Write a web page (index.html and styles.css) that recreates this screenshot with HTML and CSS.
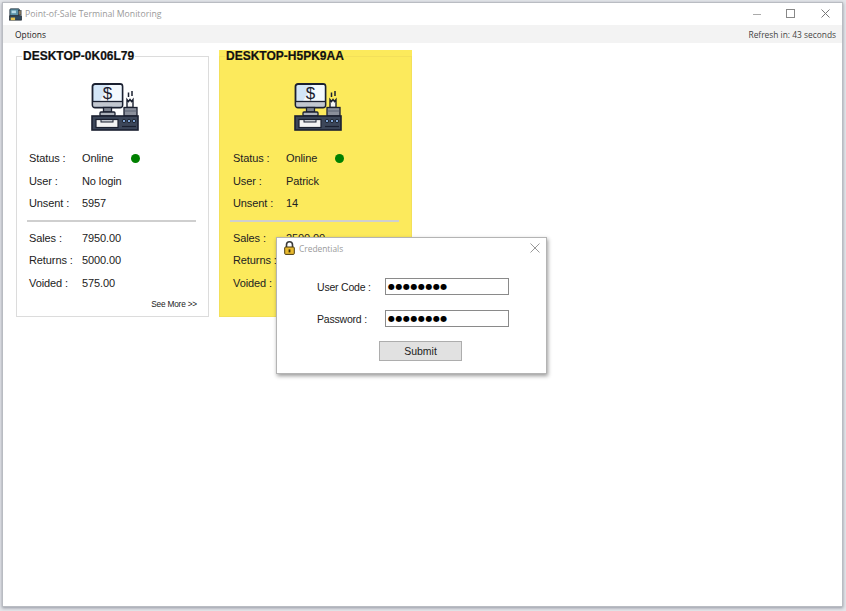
FILE: index.html
```html
<!DOCTYPE html>
<html>
<head>
    <meta charset="utf-8" />
    <title>Point-of-Sale Terminal Monitoring</title>
    <link rel="stylesheet" href="styles.css">
</head>

<body>
    <div class="window">
        <div class="titlebar">
            <svg class="app-icon" width="13" height="13" viewBox="0 0 15 15">
                <rect x="1" y="1" width="11" height="8" rx="1" fill="#5b93a8" stroke="#2a3540" />
                <rect x="3" y="3" width="5" height="3" fill="#b7dbe6" />
                <rect x="11" y="3" width="3" height="5" fill="#8b7a5d" stroke="#2a3540" stroke-width=".7" />
                <rect x="0.5" y="9" width="14" height="5" fill="#2f4a5e" stroke="#20262e" stroke-width=".8" />
                <rect x="2" y="11" width="5" height="3" fill="#e6c34d" />
            </svg>
            <span class="app-title">Point-of-Sale Terminal Monitoring</span>
            <div class="win-buttons">
                <svg width="10" height="10" viewBox="0 0 10 10"><path d="M2 5.5h8" stroke="#aaa" /></svg>
                <svg width="10" height="10" viewBox="0 0 10 10"><rect x=".5" y=".5" width="8" height="8" fill="none" stroke="#888" /></svg>
                <svg width="10" height="10" viewBox="0 0 10 10"><path d="M.5 .5l8 8M8.5 .5l-8 8" stroke="#777" fill="none" /></svg>
            </div>
        </div>

        <div class="menubar">
            <span>Options</span>
            <span class="refresh">Refresh in: 43 seconds</span>
        </div>

        <div class="terminals">
            <div class="terminal">
                <fieldset class="panel">
                    <legend>DESKTOP-0K06L79</legend>
                    <svg class="pos-icon" viewBox="0 0 48 48">
                        <rect x="1.5" y="1" width="30" height="23.5" rx="2.5" fill="#d3e6f8" stroke="#1b2030" stroke-width="1.8" />
                        <path d="M18 2h11.5a1 1 0 0 1 1 1v15H9z" fill="#f4f9fe" />
                        <rect x="2.4" y="18.5" width="28.2" height="5" fill="#c3c8d0" />
                        <path d="M1.5 18.5h30" stroke="#1b2030" stroke-width="1.3" />
                        <text x="16.5" y="15.5" class="dollar">$</text>
                        <rect x="12.5" y="24.5" width="8" height="4.5" fill="#7d838f" stroke="#1b2030" stroke-width="1.3" />
                        <rect x="9" y="29" width="15" height="4" rx="1" fill="#aeb3bc" stroke="#1b2030" stroke-width="1.3" />
                        <path d="M36 24.5v-8l1.5 2 1.5-2 1.5 2 1.5-2v8z" fill="#f5f5f5" stroke="#1b2030" stroke-width="1.4" />
                        <path d="M37.5 14V9.5M41 13V8" stroke="#1b2030" stroke-width="1.5" fill="none" />
                        <rect x="33" y="24.5" width="13" height="8.5" fill="#8a8f9b" stroke="#1b2030" stroke-width="1.3" />
                        <path d="M33.6 28h11.8" stroke="#5d6474" stroke-width="1" />
                        <rect x="1" y="33" width="46" height="14" fill="#3c4659" stroke="#1b2030" stroke-width="1.6" />
                        <rect x="5" y="36.5" width="22" height="8" fill="#f3f3f3" stroke="#1b2030" stroke-width="1.2" />
                        <rect x="10" y="36.5" width="12" height="2.5" fill="#c5c9d0" stroke="#1b2030" stroke-width="1" />
                        <circle cx="33" cy="38" r="1.7" fill="#7fa4d4" stroke="#10141c" stroke-width=".8" />
                        <circle cx="38" cy="38" r="1.7" fill="#7fa4d4" stroke="#10141c" stroke-width=".8" />
                        <circle cx="43" cy="38" r="1.7" fill="#7fa4d4" stroke="#10141c" stroke-width=".8" />
                        <path d="M31 43.5h14" stroke="#1b2030" stroke-width="1.2" />
                    </svg>
                    <div class="row"><label>Status :</label><span>Online</span><i class="dot"></i></div>
                    <div class="row"><label>User :</label><span>No login</span></div>
                    <div class="row"><label>Unsent :</label><span>5957</span></div>
                    <hr />
                    <div class="row"><label>Sales :</label><span>7950.00</span></div>
                    <div class="row"><label>Returns :</label><span>5000.00</span></div>
                    <div class="row"><label>Voided :</label><span>575.00</span></div>
                    <div class="see-more">See More &gt;&gt;</div>
                </fieldset>
            </div>
            <div class="terminal active">
                <fieldset class="panel">
                    <legend>DESKTOP-H5PK9AA</legend>
                    <svg class="pos-icon" viewBox="0 0 48 48">
                        <rect x="1.5" y="1" width="30" height="23.5" rx="2.5" fill="#d3e6f8" stroke="#1b2030" stroke-width="1.8" />
                        <path d="M18 2h11.5a1 1 0 0 1 1 1v15H9z" fill="#f4f9fe" />
                        <rect x="2.4" y="18.5" width="28.2" height="5" fill="#c3c8d0" />
                        <path d="M1.5 18.5h30" stroke="#1b2030" stroke-width="1.3" />
                        <text x="16.5" y="15.5" class="dollar">$</text>
                        <rect x="12.5" y="24.5" width="8" height="4.5" fill="#7d838f" stroke="#1b2030" stroke-width="1.3" />
                        <rect x="9" y="29" width="15" height="4" rx="1" fill="#aeb3bc" stroke="#1b2030" stroke-width="1.3" />
                        <path d="M36 24.5v-8l1.5 2 1.5-2 1.5 2 1.5-2v8z" fill="#f5f5f5" stroke="#1b2030" stroke-width="1.4" />
                        <path d="M37.5 14V9.5M41 13V8" stroke="#1b2030" stroke-width="1.5" fill="none" />
                        <rect x="33" y="24.5" width="13" height="8.5" fill="#8a8f9b" stroke="#1b2030" stroke-width="1.3" />
                        <path d="M33.6 28h11.8" stroke="#5d6474" stroke-width="1" />
                        <rect x="1" y="33" width="46" height="14" fill="#3c4659" stroke="#1b2030" stroke-width="1.6" />
                        <rect x="5" y="36.5" width="22" height="8" fill="#f3f3f3" stroke="#1b2030" stroke-width="1.2" />
                        <rect x="10" y="36.5" width="12" height="2.5" fill="#c5c9d0" stroke="#1b2030" stroke-width="1" />
                        <circle cx="33" cy="38" r="1.7" fill="#7fa4d4" stroke="#10141c" stroke-width=".8" />
                        <circle cx="38" cy="38" r="1.7" fill="#7fa4d4" stroke="#10141c" stroke-width=".8" />
                        <circle cx="43" cy="38" r="1.7" fill="#7fa4d4" stroke="#10141c" stroke-width=".8" />
                        <path d="M31 43.5h14" stroke="#1b2030" stroke-width="1.2" />
                    </svg>
                    <div class="row"><label>Status :</label><span>Online</span><i class="dot"></i></div>
                    <div class="row"><label>User :</label><span>Patrick</span></div>
                    <div class="row"><label>Unsent :</label><span>14</span></div>
                    <hr />
                    <div class="row"><label>Sales :</label><span>2500.00</span></div>
                    <div class="row"><label>Returns :</label></div>
                    <div class="row"><label>Voided :</label></div>
                </fieldset>
            </div>
        </div>

        <div class="dialog">
            <div class="dialog-title">
                <svg width="11" height="14" viewBox="0 0 11 14">
                    <path d="M2.5 6V3.8a3 3 0 0 1 6 0V6" fill="none" stroke="#3a3a3a" stroke-width="1.6" />
                    <rect x=".7" y="6" width="9.6" height="7.4" rx="1" fill="#e8b92e" stroke="#4a3a10" />
                    <rect x="4.6" y="8.4" width="1.8" height="3" fill="#3a2c08" />
                </svg>
                <span class="dialog-name">Credentials</span>
                <svg class="dialog-close" width="10" height="10" viewBox="0 0 10 10"><path d="M.5 .5l9 9M9.5 .5l-9 9" stroke="#999" fill="none" /></svg>
            </div>
            <form class="cred-form">
                <div class="cred-row"><label>User Code :</label><div class="pw-box">&#9679;&#9679;&#9679;&#9679;&#9679;&#9679;&#9679;&#9679;</div></div>
                <div class="cred-row"><label>Password :</label><div class="pw-box">&#9679;&#9679;&#9679;&#9679;&#9679;&#9679;&#9679;&#9679;</div></div>
                <div class="submit">Submit</div>
            </form>
        </div>
    </div>
</body>
</html>
```

FILE: styles.css
```css
* {margin: 0;padding: 0;box-sizing: border-box;}
html, body {height: 100%;}
body {font: 11px "Liberation Sans", Arial, sans-serif;color: #222;background: #e4e6ea;padding: 2px 3px 4px 2px;overflow: hidden;}
.dollar {font: 17px "Liberation Sans", Arial, sans-serif;fill: #1b2030;text-anchor: middle;}

/*main window*/
.window {position: relative;height: 100%;background: #fff;border: 1px solid #b9bcc2;box-shadow: 0 1px 3px rgba(90,95,110,.6);display: flex;flex-direction: column;}
.titlebar {height: 22px;display: flex;align-items: center;padding-left: 6px;}
.app-icon {margin-right: 3px;}
.app-title {font-size: 8.7px;color: #9a9a9a;font-family: "Open Sans", "Liberation Sans", sans-serif;}
.win-buttons {margin-left: auto;display: flex;gap: 25px;padding-right: 11px;}
.menubar {height: 18px;background: #f3f3f3;display: flex;align-items: center;justify-content: space-between;padding: 0 6px 0 12px;font-size: 8.4px;font-family: "Open Sans", "Liberation Sans", sans-serif;}
.refresh {color: #444;}

/*terminal cards*/
.terminals {display: flex;gap: 10px;padding: 7px 0 0 13px;}
.terminal {width: 193px;height: 267px;}
.terminal.active {background: #fcea5c;}
.panel {height: 100%;border: 1px solid #dcdcdc;padding: 0 12px;display: block;}
.terminal.active .panel {border-color: #f3e05a;}
.panel legend {font-size: 12px;font-weight: bold;line-height: 13px;color: #111;margin-left: -7px;padding: 0 1px;-webkit-text-stroke: .2px #111;}
.pos-icon {display: block;width: 48px;height: 48px;margin: 20px 0 16px 62px;}
.row {display: flex;align-items: center;height: 22.5px;font-size: 11px;letter-spacing: -.1px;}
.row label {width: 53px;}
.terminal.active .row label {margin-left: 1px;}
.dot {width: 9px;height: 9px;border-radius: 50%;background: #008000;margin-left: 18px;}
.panel hr {border: 0;border-top: 2px solid #cfcfcf;margin: 5px 0 5px -2px;height: 0;}
.see-more {text-align: right;font-size: 8.3px;margin: 5px -1px 0 0;letter-spacing: -.2px;color: #222;}

/*credentials popup*/
.dialog {position: absolute;left: 273px;top: 234px;width: 271px;height: 137px;background: #fff;border: 1px solid #b4b4b4;box-shadow: 1px 2px 4px rgba(0,0,0,.4);}
.dialog-title {height: 20px;display: flex;align-items: center;padding: 0 6px 0 7px;}
.dialog-name {margin-left: 4px;font-size: 8.4px;color: #9a9a9a;font-family: "Open Sans", "Liberation Sans", sans-serif;}
.dialog-close {margin-left: auto;}
.cred-form {padding: 20px 0 0 40px;}
.cred-row {display: flex;align-items: center;height: 17px;margin-bottom: 15px;font-size: 10.5px;letter-spacing: -.2px;}
.cred-row label {width: 68px;}
.pw-box {width: 124px;height: 17px;border: 1px solid #8a8a8a;font-size: 8px;line-height: 15px;padding-left: 2px;letter-spacing: .5px;color: #000;font-family: "DejaVu Sans", sans-serif;white-space: nowrap;overflow: hidden;}
.submit {width: 83px;height: 20px;margin: -1px 0 0 62px;background: #e1e1e1;border: 1px solid #adadad;text-align: center;line-height: 18px;font-size: 10.5px;}
```
